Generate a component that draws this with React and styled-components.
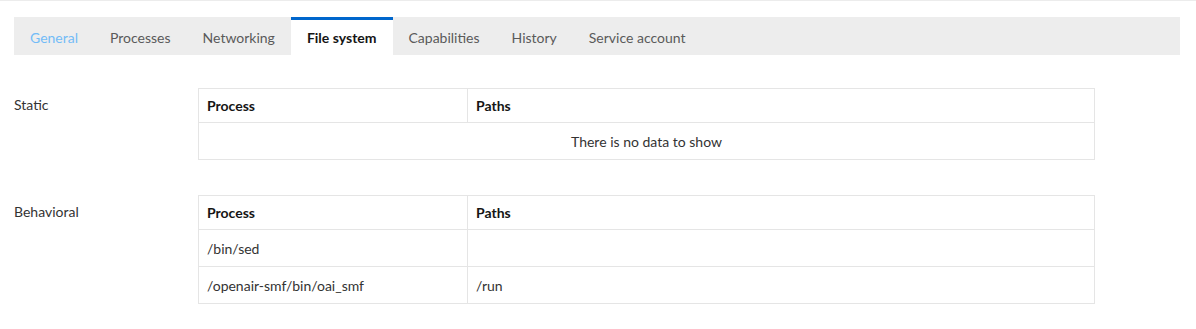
import React from "react";
import styled, { createGlobalStyle } from "styled-components";

const Global = createGlobalStyle`
  html, body { margin: 0; padding: 0; background: #fff; }
  body { font-family: Lato, "Open Sans", "Liberation Sans", sans-serif; color: #333; }
`;

const Page = styled.div`
  width: 1196px;
  border-top: 1px solid #ececec;
  padding: 16px 16px 0 14px;
  box-sizing: border-box;
`;

const TabBar = styled.nav`
  display: flex;
  height: 38px;
  background: #ededed;
`;

const Tab = styled.div`
  display: flex;
  align-items: center;
  padding: 0 16px 1px;
  box-sizing: border-box;
  font-size: 14px;
  border-top: 3px solid ${(p) => (p.$active ? "#0066cc" : "transparent")};
  background: ${(p) => (p.$active ? "#fff" : "transparent")};
  color: ${(p) => (p.$active ? "#151515" : p.$link ? "#73bcf7" : "#5a5a5a")};
  font-weight: ${(p) => (p.$active ? 700 : 400)};
`;

const Sections = styled.div`
  display: flex;
  flex-direction: column;
  gap: 35px;
  margin-top: 33px;
`;

const Section = styled.section`
  display: grid;
  grid-template-columns: 184px 897px;
`;

const Label = styled.div`
  font-size: 14px;
  color: #333;
  line-height: 34px;
`;

const Table = styled.table`
  width: 100%;
  border-collapse: collapse;
  font-size: 14px;
  table-layout: fixed;
`;

const Th = styled.th`
  text-align: left;
  font-weight: 700;
  color: #151515;
  height: 34px;
  padding: 0 8px;
  border: 1px solid #e5e5e5;
  box-sizing: border-box;
  width: ${(p) => p.$w || "auto"};
`;

const Td = styled.td`
  height: 37px;
  padding: 0 8px;
  border: 1px solid #e5e5e5;
  color: #333;
  box-sizing: border-box;
  text-align: ${(p) => (p.$center ? "center" : "left")};
`;

const tabs = ["General", "Processes", "Networking", "File system", "Capabilities", "History", "Service account"];

function DataTable({ rows }) {
  return (
    <Table>
      <thead>
        <tr>
          <Th $w="269px">Process</Th>
          <Th>Paths</Th>
        </tr>
      </thead>
      <tbody>
        {rows.length === 0 ? (
          <tr>
            <Td colSpan={2} $center>There is no data to show</Td>
          </tr>
        ) : (
          rows.map((r, i) => (
            <tr key={i}>
              <Td>{r[0]}</Td>
              <Td>{r[1]}</Td>
            </tr>
          ))
        )}
      </tbody>
    </Table>
  );
}

export default function App() {
  return (
    <>
      <Global />
      <Page>
        <TabBar>
          {tabs.map((t) => (
            <Tab key={t} $active={t === "File system"} $link={t === "General"}>
              {t}
            </Tab>
          ))}
        </TabBar>
        <Sections>
          <Section>
            <Label>Static</Label>
            <DataTable rows={[]} />
          </Section>
          <Section>
            <Label>Behavioral</Label>
            <DataTable rows={[["/bin/sed", ""], ["/openair-smf/bin/oai_smf", "/run"]]} />
          </Section>
        </Sections>
      </Page>
    </>
  );
}
